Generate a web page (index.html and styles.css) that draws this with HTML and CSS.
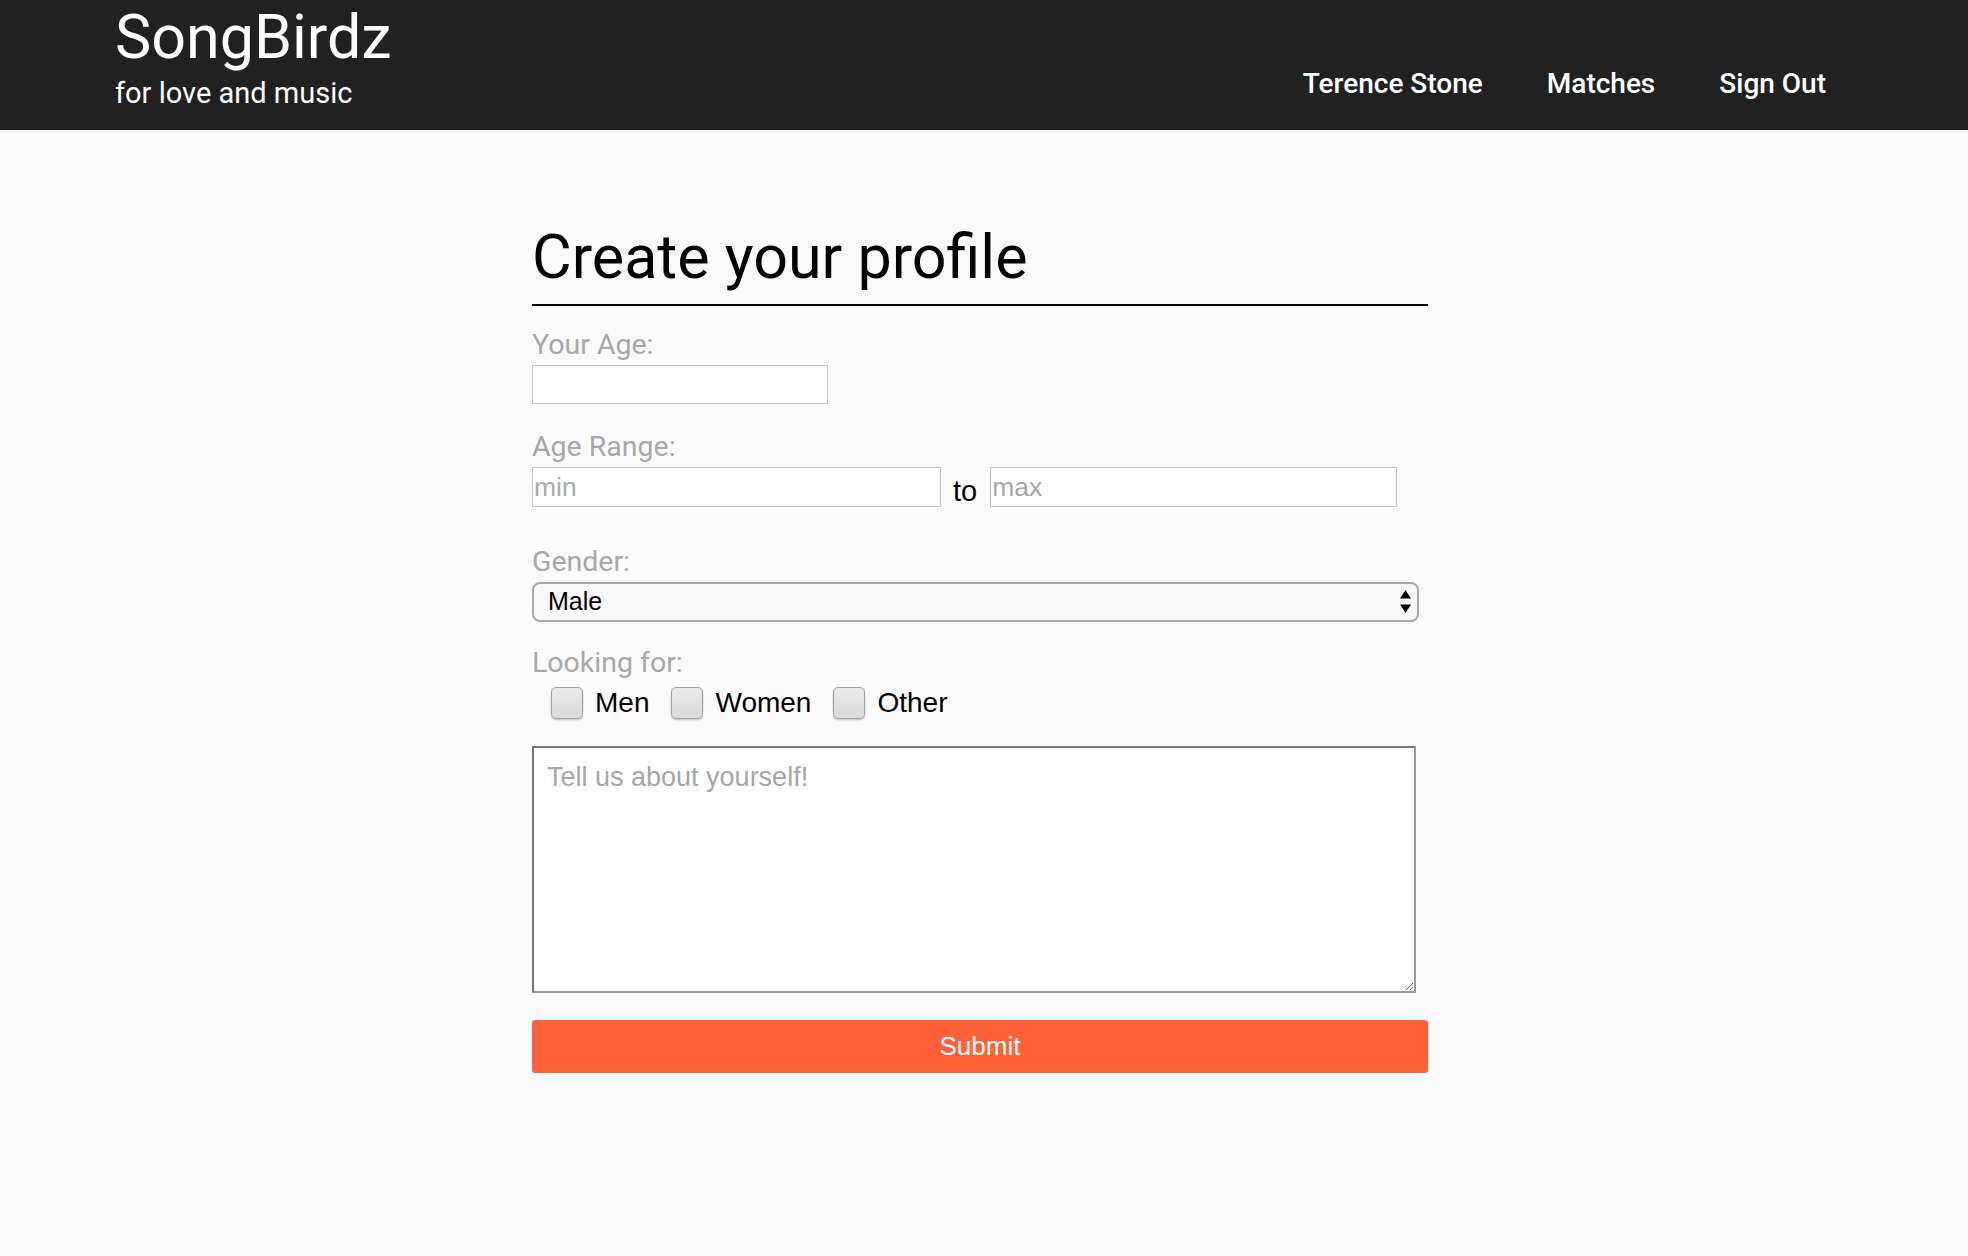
FILE: index.html
```html
<!DOCTYPE html>
<html lang="en">
<head>
<meta charset="utf-8">
<title>SongBirdz - Create your profile</title>
<link rel="stylesheet" href="styles.css">
</head>
<body>
<header class="topbar">
  <div class="brand">
    <div class="brand-name">SongBirdz</div>
    <div class="brand-tag">for love and music</div>
  </div>
  <nav class="nav">
    <a class="nav-link" href="#">Terence Stone</a>
    <a class="nav-link" href="#">Matches</a>
    <a class="nav-link" href="#">Sign Out</a>
  </nav>
</header>
<main class="page">
  <form class="profile-form">
    <h1 class="form-title">Create your profile</h1>

    <div class="field field-first">
      <label class="field-label">Your Age:</label>
      <input class="text-input input-age" type="text">
    </div>

    <div class="field field-range">
      <label class="field-label">Age Range:</label>
      <div class="range-row">
        <input class="text-input input-min" type="text" placeholder="min">
        <span class="range-to">to</span>
        <input class="text-input input-max" type="text" placeholder="max">
      </div>
    </div>

    <div class="field field-gender">
      <label class="field-label">Gender:</label>
      <div class="select-wrap">
        <select class="select">
          <option>Male</option>
          <option>Female</option>
          <option>Other</option>
        </select>
        <svg class="select-arrows" width="11" height="24" viewBox="0 0 11 24" aria-hidden="true">
          <polygon points="5.5,0 11,8.5 0,8.5" fill="#000"/>
          <polygon points="0,14.5 11,14.5 5.5,23" fill="#000"/>
        </svg>
      </div>
    </div>

    <div class="field field-looking">
      <label class="field-label">Looking for:</label>
      <div class="check-row">
        <label class="check-option"><input class="check" type="checkbox"><span class="check-text">Men</span></label>
        <label class="check-option"><input class="check" type="checkbox"><span class="check-text">Women</span></label>
        <label class="check-option"><input class="check" type="checkbox"><span class="check-text">Other</span></label>
      </div>
    </div>

    <textarea class="about" placeholder="Tell us about yourself!"></textarea>

    <button class="submit" type="button">Submit</button>
  </form>
</main>
</body>
</html>
```

FILE: styles.css
```css
* {
  box-sizing: border-box;
}

html, body {
  margin: 0;
  padding: 0;
}

body {
  background: #fafafa;
  font-family: Roboto, "Liberation Sans", Arial, sans-serif;
  color: #000;
  min-height: 1256px;
}

/* Header */
.topbar {
  height: 130px;
  background: #212121;
  display: flex;
  justify-content: space-between;
  padding: 0 110px 0 115px;
  color: #fff;
}

.brand {
  padding-top: 7px;
}

.brand-name {
  font-size: 61px;
  line-height: 60px;
  font-weight: 400;
}

.brand-tag {
  margin-top: 12px;
  font-size: 29px;
  line-height: 29px;
}

.nav {
  display: flex;
  align-items: flex-start;
  padding-top: 70px;
}

.nav-link {
  color: #fff;
  text-decoration: none;
  font-size: 28px;
  line-height: 28px;
  font-weight: 500;
  padding: 0 32px;
}

/* Page */
.page {
  width: 904px;
  margin: 0 auto;
  padding: 92px 8px 0 0;
}

.profile-form {
  display: flex;
  flex-direction: column;
  align-items: flex-start;
}

.form-title {
  align-self: stretch;
  margin: 0;
  font-size: 61px;
  line-height: 70px;
  font-weight: 400;
  padding-bottom: 12px;
  border-bottom: 2px solid #000;
}

.field {
  display: flex;
  flex-direction: column;
  align-items: flex-start;
  align-self: stretch;
}

.field-first { margin-top: 23px; }
.field-range { margin-top: 27px; }
.field-gender { margin-top: 39px; }
.field-looking { margin-top: 25px; }

.field-label {
  font-size: 28.5px;
  line-height: 32px;
  color: #a8a8a8;
  margin-bottom: 4px;
}

.text-input {
  font-family: "Liberation Sans", Arial, sans-serif;
  font-size: 26.5px;
  height: 40px;
  border: 1px solid #c6c6c6;
  background: #fff;
  padding: 0 1px;
  margin: 0;
  outline: none;
}

.text-input::placeholder {
  color: #a9a9a9;
}

.input-age {
  width: 296px;
  height: 39px;
}

.range-row {
  display: flex;
  align-items: flex-end;
}

.input-min {
  width: 409px;
}

.input-max {
  width: 407px;
}

.range-to {
  font-family: "Liberation Sans", Arial, sans-serif;
  font-size: 29px;
  line-height: 32px;
  margin: 0 13px 0 12px;
}

.select-wrap {
  position: relative;
  width: 887px;
}

.select {
  appearance: none;
  -webkit-appearance: none;
  width: 100%;
  height: 40px;
  border: 2px solid #a9a9a9;
  border-radius: 8px;
  background: #f8f8f8;
  font-family: "Liberation Sans", Arial, sans-serif;
  font-size: 25px;
  color: #000;
  padding: 0 0 3px 14px;
  margin: 0;
  outline: none;
}

.select-arrows {
  position: absolute;
  right: 8px;
  top: 8px;
}

.check-row {
  display: flex;
  align-items: center;
  padding: 4px 0 0 19px;
}

.check-option {
  display: flex;
  align-items: center;
  margin-right: 22px;
  font-family: "Liberation Sans", Arial, sans-serif;
  font-size: 28px;
  line-height: 32px;
  color: #000;
}

.check {
  appearance: none;
  -webkit-appearance: none;
  width: 32px;
  height: 32px;
  margin: 0 12px 0 0;
  border: 1px solid #a3a3a3;
  border-radius: 5px;
  background: linear-gradient(#e9e9e9, #dadada);
  box-shadow: 0 1px 2px rgba(0, 0, 0, 0.25);
}

.about {
  margin-top: 27px;
  width: 884px;
  height: 247px;
  border-style: solid;
  border-width: 2px;
  border-color: #767676 #9a9a9a #9a9a9a #767676;
  background: #fff;
  padding: 14px 13px;
  font-family: "Liberation Sans", Arial, sans-serif;
  font-size: 27px;
  outline: none;
}

.about::placeholder {
  color: #a6a6a6;
}

.submit {
  margin-top: 27px;
  align-self: stretch;
  height: 53px;
  border: none;
  border-radius: 3px;
  background: #ff6138;
  color: #fff;
  font-family: "Liberation Sans", Arial, sans-serif;
  font-size: 26px;
  padding: 0;
}
```
